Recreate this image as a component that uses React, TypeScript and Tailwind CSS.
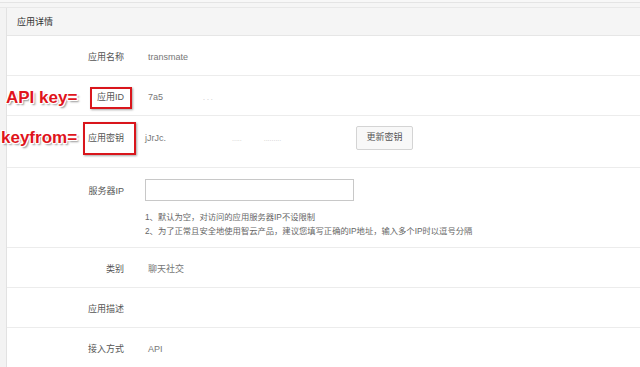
import React from "react";

const Row = ({ label, children, h = "h-[40px]" }: { label: string; children?: React.ReactNode; h?: string }) => (
  <div className={`${h} flex items-center border-b border-[#ececec] pt-[4px]`}>
    <div className="w-[117px] text-right text-[9px] text-[#555]">{label}</div>
    <div className="ml-[24px] text-[9px] text-[#777]">{children}</div>
  </div>
);

export default function App() {
  const ann =
    "absolute text-[17px] leading-none font-bold text-[#e0141c] [font-family:'Liberation_Sans',Arial,sans-serif] [text-shadow:1px_0_0_#fff,-1px_0_0_#fff,0_1px_0_#fff,0_-1px_0_#fff,1px_1px_0_#fff,-1px_-1px_0_#fff,1px_-1px_0_#fff,-1px_1px_0_#fff,2px_2px_2px_rgba(0,0,0,0.45)]";
  return (
    <div className="relative w-[640px] h-[367px] overflow-hidden bg-[#f3f3f3] [font-family:'Liberation_Sans','Noto_Sans_CJK_SC',sans-serif]">
      <div className="h-[2px] bg-[#f7f7f7]" />
      <div className="h-[1px] bg-[#e4e4e4]" />
      <div className="h-[4px] bg-[#f5f5f5]" />
      <div className="h-[1px] bg-[#e8e8e8]" />
      <div className="flex">
        <div className="w-[6px] shrink-0" />
        <div className="flex-1 border-l border-[#e2e2e2] bg-white">
          <div className="h-[28px] bg-[#f5f5f5] border-b border-[#e6e6e6] flex items-center pl-[10px] pt-[3px] text-[9px] text-[#333]">
            应用详情
          </div>
          <Row label="应用名称">transmate</Row>
          <Row label="应用ID">
            <span>7a5</span>
            <span className="ml-[40px] text-[#bbb] text-[7px]">. . .</span>
          </Row>
          <div className="h-[52px] flex items-center border-b border-[#ececec] pb-[6px]">
            <div className="w-[117px] text-right text-[9px] text-[#555]">应用密钥</div>
            <div className="ml-[21px] flex items-center">
              <div className="w-[211px] text-[9px] text-[#777]">
                <span>jJrJc.</span>
                <span className="ml-[66px] text-[#ccc] text-[7px]">.....</span>
                <span className="ml-[22px] text-[#ccc] text-[7px]">.........</span>
              </div>
              <div className="w-[57px] h-[24px] mb-[2px] flex items-center justify-center border border-[#d4d4d4] bg-[#f8f8f8] rounded-[2px] text-[9px] text-[#555]">
                更新密钥
              </div>
            </div>
          </div>
          <div className="h-[80px] flex items-start border-b border-[#ececec] pt-[11px]">
            <div className="w-[117px] h-[22px] flex items-center justify-end pt-[3px] text-[9px] text-[#555]">服务器IP</div>
            <div className="ml-[21px]">
              <div className="w-[209px] h-[22px] border border-[#c8c8c8] bg-white" />
              <div className="mt-[9px] text-[8.3px] leading-[14px] text-[#666]">
                <div>1、默认为空，对访问的应用服务器IP不设限制</div>
                <div>2、为了正常且安全地使用智云产品，建议您填写正确的IP地址，输入多个IP时以逗号分隔</div>
              </div>
            </div>
          </div>
          <Row label="类别">聊天社交</Row>
          <Row label="应用描述" />
          <Row label="接入方式">API</Row>
        </div>
      </div>

      <div className="absolute left-[90px] top-[87px] w-[42px] h-[22px] border-2 border-[#d9161c] shadow-[1px_1px_2px_rgba(0,0,0,0.35)]" />
      <div className="absolute left-[83px] top-[122px] w-[53px] h-[33px] border-2 border-[#d9161c] shadow-[1px_1px_2px_rgba(0,0,0,0.35)]" />
      <div className={`${ann} left-[6px] top-[89px]`}>API key=</div>
      <div className={`${ann} left-[1px] top-[129px]`}>keyfrom=</div>
    </div>
  );
}
